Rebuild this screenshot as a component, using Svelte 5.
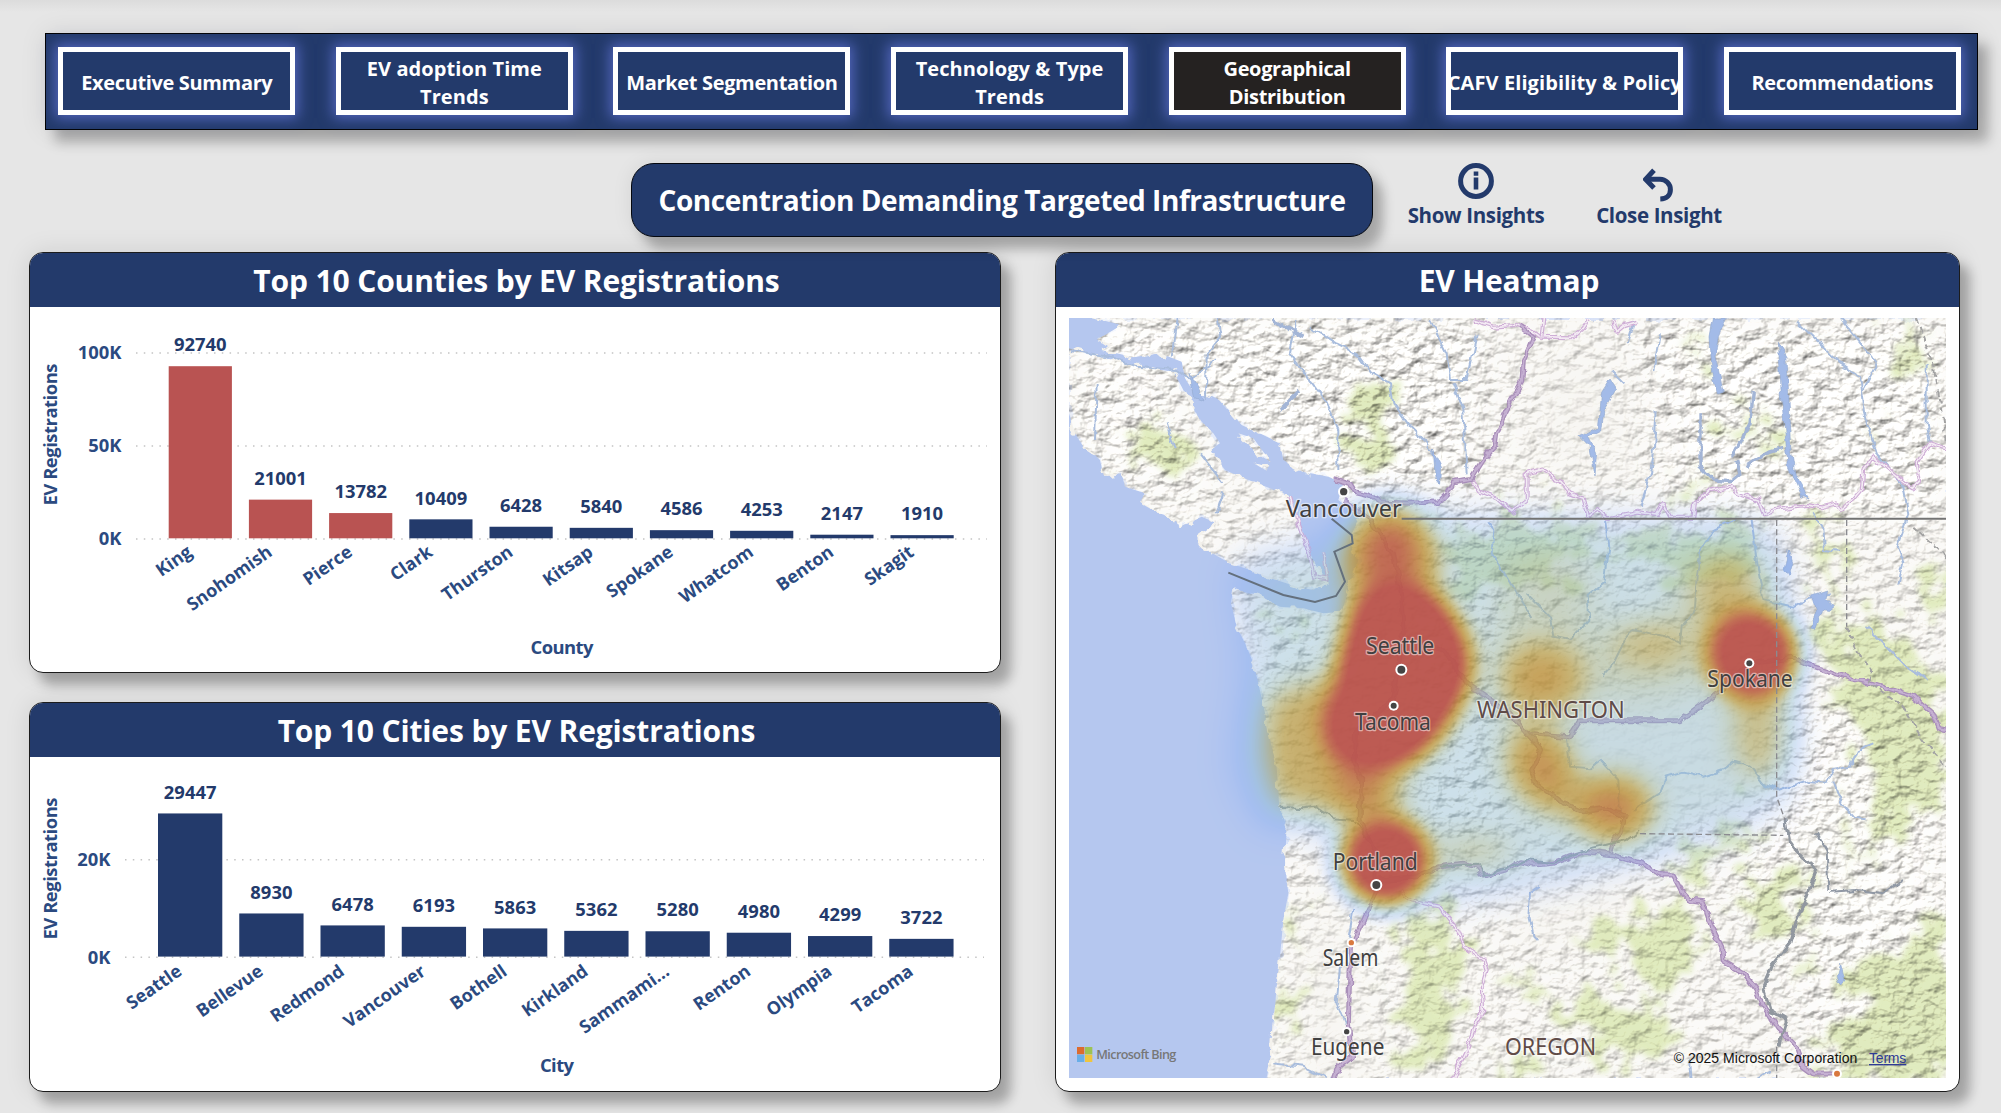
<script>
  const tabs = [
    { lines: ['Executive Summary'] },
    { lines: ['EV adoption Time', 'Trends'], wide: true },
    { lines: ['Market Segmentation'] },
    { lines: ['Technology & Type', 'Trends'], wide: true },
    { lines: ['Geographical', 'Distribution'], active: true },
    { lines: ['CAFV Eligibility & Policy'], wide: true },
    { lines: ['Recommendations'] }
  ];

  const charts = [
    {
      title: 'Top 10 Counties by EV Registrations',
      kind: 'counties',
      top: 307, height: 365,
      axis: 'County', axisX: 562, axisY: 654, axisW: 63, nameY: 434.5,
      gridX: 136, gridEnd: 987, tickX: 121.5,
      base: 538.7, unit: 0.00186,
      ticks: [[100000, '100K'], [50000, '50K'], [0, '0K']],
      barX: 168.7, pitch: 80.2, barW: 63.2, labelDrop: 15,
      rows: [
        ['King', 92740, true], ['Snohomish', 21001, true], ['Pierce', 13782, true],
        ['Clark', 10409], ['Thurston', 6428], ['Kitsap', 5840], ['Spokane', 4586],
        ['Whatcom', 4253], ['Benton', 2147], ['Skagit', 1910]
      ]
    },
    {
      title: 'Top 10 Cities by EV Registrations',
      kind: 'cities',
      top: 757, height: 334,
      axis: 'City', axisX: 557, axisY: 1072, axisW: 34, nameY: 868.5,
      gridX: 125, gridEnd: 984, tickX: 110.5,
      base: 957, unit: 0.004875,
      ticks: [[20000, '20K'], [0, '0K']],
      barX: 158, pitch: 81.25, barW: 64.3, labelDrop: 16,
      rows: [
        ['Seattle', 29447], ['Bellevue', 8930], ['Redmond', 6478], ['Vancouver', 6193],
        ['Bothell', 5863], ['Kirkland', 5362], ['Sammami…', 5280], ['Renton', 4980],
        ['Olympia', 4299], ['Tacoma', 3722]
      ]
    }
  ];

  const places = [
    { name: 'Vancouver', x: 707, y: 652, w: 348, dot: [881, 575, 11] },
    { name: 'Seattle', x: 948, y: 1061, w: 205, dot: [1054, 1109, 12] },
    { name: 'Tacoma', x: 915, y: 1291, w: 227, dot: [1031, 1217, 9] },
    { name: 'Portland', x: 848, y: 1709, w: 255, dot: [979, 1755, 12] },
    { name: 'Spokane', x: 1972, y: 1160, w: 256, dot: [2098, 1090, 9] },
    { name: 'Salem', x: 818, y: 1999, w: 167, dot: [904, 1928, 8], capital: true },
    { name: 'Eugene', x: 783, y: 2264, w: 220, dot: [890, 2195, 8] }
  ];

  const motorways = [
    'M850 536 L900 550 L915 575 L960 585 L990 605 L1080 610 L1170 605 L1190 585 L1210 545 L1265 535 L1300 480 L1335 440 L1340 400 L1360 350 L1385 300 L1415 250 L1420 180 L1450 110 L1410 80',
    'M880 600 L960 660 L1030 760 L1052 880 L1060 1000 L1030 1200 L920 1290 L915 1390 L935 1440 L930 1560 L975 1650 L975 1780 L940 1860 L905 1930 L898 2060 L895 2170 L905 2270 L865 2300 L850 2340',
    'M1050 1010 L1180 1050 L1250 1150 L1380 1240 L1430 1300 L1560 1310 L1590 1262 L1890 1262 L1990 1190 L2100 1090 L2230 1075 L2290 1100 L2400 1135 L2470 1150 L2590 1190 L2650 1240 L2668 1285 L2690 1290',
    'M1430 1300 L1475 1350 L1445 1410 L1460 1450 L1530 1505 L1600 1535 L1670 1525 L1725 1550 L1710 1600 L1690 1625 L1680 1665',
    'M985 1740 L1100 1730 L1170 1700 L1240 1690 L1280 1700 L1300 1725 L1370 1710 L1410 1685 L1450 1695 L1510 1690 L1560 1670 L1610 1655 L1690 1665 L1770 1690 L1840 1725 L1870 1725 L1900 1780 L1920 1800 L1960 1805 L1985 1880 L2015 1940 L2020 1985 L2080 2020 L2120 2070 L2140 2120 L2180 2180 L2240 2240 L2260 2300 L2290 2322 L2361 2322'
  ];
  const highways = [
    'M1270 60 L1330 80 L1390 75 L1450 95 L1470 110 L1570 112 L1600 85 L1620 54',
    'M1480 54 L1475 110 M1690 60 L1700 95 L1725 75 L1760 65',
    'M1265 540 L1290 575 L1340 595 L1385 635 L1430 600 L1430 520 L1475 508 L1530 545 L1560 580 L1600 595 L1615 650 L1640 630 L1670 655 L1760 635 L1820 645 L1840 612 L1860 650 L1930 650 L1935 610 L1980 570 L2040 560 L2060 580 L2125 600 L2140 640 L2190 625 L2270 615 L2310 622 L2360 610 L2375 630 L2410 600 L2435 570 L2440 510 L2470 470 L2530 520 L2590 565 L2610 545 L2600 490 L2640 430 L2690 445',
    'M720 590 L740 660 L755 700 L775 750 L795 830 L830 835 L820 760',
    'M1050 1775 L1080 1800 L1170 1820 L1190 1850 L1225 1890 L1245 1940 L1300 1980 L1310 2010 L1295 2060 L1300 2130 L1270 2190 L1250 2250 L1205 2340'
  ];
  const rivers = [
    'M780 80 L860 130 L920 160 L960 215 L1020 250 L1030 310 L1080 380 L1130 430 L1165 490 L1170 550',
    'M1140 60 L1190 160 L1200 240 L1250 240 L1280 100',
    'M1210 250 L1240 330 L1250 520',
    'M740 60 L720 160 L830 310 L865 390 L865 510',
    'M380 54 L365 170 M500 54 L510 110 L470 160 L468 300',
    'M57 150 L180 170 L260 200 L380 210 L420 240 L500 180',
    'M350 370 L375 450 M450 460 L520 550 M520 580 L500 640 M140 250 L135 420',
    'M1680 210 L1720 250 M1750 60 L1730 130 M1830 100 L1810 210',
    'M1820 330 L1810 470 L1790 560 L1770 620',
    'M2240 60 L2370 190 L2430 230 L2450 370 L2480 460 L2560 560 L2575 640 L2540 740 L2560 790 L2545 855',
    'M2370 54 L2480 190 L2440 270',
    'M2630 190 L2630 370 L2640 430',
    'M2290 640 L2320 690 L2325 750 L2370 755',
    'M2105 660 L2120 780 L2140 900 L2230 920 L2270 900 L2340 880',
    'M2060 655 L1990 690 L1955 740 L1940 830 L1935 930 L1895 980 L1890 1030 L1850 1010 L1750 990 L1730 1010 L1690 1090 L1655 1130',
    'M1665 660 L1675 740 L1660 850 L1610 890 L1615 960 L1560 1020 L1510 1010 L1500 950 L1430 880',
    'M1550 1310 L1560 1400 L1620 1405 L1650 1380 L1705 1440 L1710 1540',
    'M1750 1530 L1830 1480 L1850 1430 L1900 1415 L1960 1430 L2020 1410 L2050 1385 L2100 1400 L2140 1450 L2180 1470',
    'M2180 1470 L2280 1440 L2330 1445 L2350 1410 L2400 1400 L2420 1350 L2470 1330',
    'M2350 1445 L2375 1510 L2410 1550 L2450 1555',
    'M1470 1760 L1440 1780 L1435 1850 L1450 1910 L1460 1920',
    'M2450 980 L2500 1030 L2570 1100 L2630 1140',
    'M910 1830 L895 1920 M870 2000 L860 2110 L885 2170',
    'M670 2290 L760 2300 L830 2335 M1920 2280 L1925 2340 M2110 2340 L2160 2310',
    'M1310 665 L1330 690 L1325 760 L1370 830 L1450 960'
  ];
</script>

<div class="page">
  <nav class="tabs">
    {#each tabs as tab}
      <button class="tab" class:active={tab.active} class:wide={tab.wide}>
        {#each tab.lines as line}<span>{line}</span>{/each}
      </button>
    {/each}
  </nav>

  <header class="headline">
    <h1>Concentration Demanding Targeted Infrastructure</h1>
    <button class="action show">
      <svg width="36" height="36" viewBox="0 0 36 36">
        <circle cx="18" cy="18" r="15.4" />
        <path class="solid" d="M15.7 8.6h4.6v4.2h-4.6zM15.7 14.4h4.6v12h-4.6z" />
      </svg>
      <span>Show Insights</span>
    </button>
    <button class="action close">
      <svg width="32" height="34" viewBox="0 0 32 34">
        <path d="M2.8 11.3H17a10.4 10.4 0 0 1 10.4 10.4c0 5-3.4 9-10.1 9.2" />
        <path d="M11 2.2 2.6 11.3l8.4 8.6" />
      </svg>
      <span>Close Insight</span>
    </button>
  </header>

  <main>
    <div class="left">
      {#each charts as c}
        <section class="card {c.kind}">
          <h2>{c.title}</h2>
          <svg class="chart" width="970" height={c.height} viewBox="30 {c.top} 970 {c.height}">
            <text class="axis" text-anchor="middle" textLength="142" transform="translate(57.3 {c.nameY}) rotate(-90)">EV Registrations</text>
            {#each c.ticks as [v, label]}
              <line class="grid" x1={c.gridX} x2={c.gridEnd} y1={c.base + 0.3 - v * c.unit} y2={c.base + 0.3 - v * c.unit} />
              <text class="axis" text-anchor="end" x={c.tickX} y={c.base + 6.6 - v * c.unit}>{label}</text>
            {/each}
            {#each c.rows as [name, value, hot], i}
              <rect class:hot x={c.barX + i * c.pitch} y={c.base - value * c.unit} width={c.barW} height={value * c.unit - 0.4} />
              <text class="value" text-anchor="middle" x={c.barX + i * c.pitch + c.barW / 2} y={c.base - value * c.unit - 14.8}>{value}</text>
              <text class="axis slant" text-anchor="end" transform="translate({c.barX + i * c.pitch + c.barW / 2 - 7} {c.base + c.labelDrop + 1}) rotate(-35)">{name}</text>
            {/each}
            <text class="axis" text-anchor="middle" textLength={c.axisW} x={c.axisX} y={c.axisY}>{c.axis}</text>
          </svg>
        </section>
      {/each}
    </div>

    <section class="card heat">
      <h2>EV Heatmap</h2>
      <svg class="map" width="877" height="760" viewBox="57 54 2631 2280">
        <defs>
          <filter id="relief" x="0" y="0" width="100%" height="100%" color-interpolation-filters="sRGB">
            <feTurbulence type="fractalNoise" baseFrequency="0.02 0.027" numOctaves="4" seed="21" result="n" />
            <feDiffuseLighting in="n" surfaceScale="10" diffuseConstant="1.19" lighting-color="#f8f6f2">
              <feDistantLight azimuth="235" elevation="58" />
            </feDiffuseLighting>
            <feComposite in2="SourceGraphic" operator="in" />
          </filter>
          <filter id="rough" x="-5%" y="-5%" width="110%" height="110%">
            <feTurbulence type="fractalNoise" baseFrequency="0.025" numOctaves="3" seed="4" />
            <feDisplacementMap in="SourceGraphic" scale="42" xChannelSelector="R" yChannelSelector="G" />
          </filter>
          <filter id="woods" x="-10%" y="-10%" width="120%" height="120%">
            <feTurbulence type="fractalNoise" baseFrequency="0.012" numOctaves="5" seed="12" />
            <feDisplacementMap in="SourceGraphic" scale="260" xChannelSelector="R" yChannelSelector="G" />
            <feGaussianBlur stdDeviation="9" />
          </filter>
          <filter id="wiggle" x="-5%" y="-5%" width="110%" height="110%">
            <feTurbulence type="fractalNoise" baseFrequency="0.03" numOctaves="2" seed="2" />
            <feDisplacementMap in="SourceGraphic" scale="22" xChannelSelector="R" yChannelSelector="G" />
          </filter>
          <filter id="soft60" x="-50%" y="-50%" width="200%" height="200%"><feGaussianBlur stdDeviation="60" /></filter>
          <filter id="soft42" x="-80%" y="-80%" width="260%" height="260%"><feGaussianBlur stdDeviation="46" /></filter>
          <filter id="soft30" x="-50%" y="-50%" width="200%" height="200%"><feGaussianBlur stdDeviation="35" /></filter>
          <!-- Density is accumulated as alpha, then mapped onto the colour ramp. -->
          <filter id="ramp" filterUnits="userSpaceOnUse" x="57" y="54" width="2631" height="2280" color-interpolation-filters="sRGB">
            <feColorMatrix values="0 0 0 1 0  0 0 0 1 0  0 0 0 1 0  0 0 0 1 0" />
            <feComponentTransfer>
              <feFuncR type="table" tableValues="0.45 0.48 0.55 0.60 0.67 0.71 0.73 0.74 0.74 0.73 0.73" />
              <feFuncG type="table" tableValues="0.62 0.66 0.73 0.70 0.66 0.61 0.56 0.48 0.39 0.33 0.33" />
              <feFuncB type="table" tableValues="0.98 0.95 0.82 0.62 0.42 0.28 0.22 0.24 0.28 0.30 0.30" />
              <feFuncA type="table" tableValues="0 0.26 0.43 0.52 0.62 0.73 0.80 0.86 0.92 0.96 0.96" />
            </feComponentTransfer>
          </filter>
          <clipPath id="land">
            <path d="M130 54 L215 75 L165 105 L140 118 L190 135 L160 150 L250 172 L330 160 L395 185 L405 235 L440 290 L480 285 L510 300 L545 340 L575 375 L640 405 L690 430 L700 480 L760 515 L835 530 L880 550 L865 600 L930 655 L900 710 L925 780 L900 860 L875 935 L820 940 L760 925 L690 920 L640 895 L550 865 L543 910 L560 980 L590 1040 L610 1090 L625 1150 L645 1240 L660 1320 L680 1400 L687 1510 L710 1580 L705 1700 L715 1780 L700 1860 L690 1970 L680 2060 L670 2180 L665 2270 L648 2340 L2700 2340 L2700 54Z" />
            <path d="M57 145 L150 172 L270 200 L370 215 L395 260 L420 310 L450 360 L490 400 L510 430 L480 450 L525 510 L560 525 L620 550 L700 580 L730 640 L760 700 L780 760 L800 800 L835 840 L790 870 L740 860 L680 840 L600 810 L540 790 L460 745 L445 710 L500 670 L455 650 L390 680 L375 660 L330 640 L270 605 L285 580 L225 560 L215 520 L160 525 L150 480 L130 460 L100 440 L75 400 L57 340Z" />
            <path d="M565 400 L610 415 L662 485 L620 460Z M610 490 L655 500 L650 512Z" />
          </clipPath>
          <mask id="hills">
            <g filter="url(#soft60)">
              <rect x="0" y="0" width="2750" height="2400" fill="#999" />
              <path d="M57 54 H1280 L1230 560 L830 540 L440 250 L57 130Z" fill="#fff" />
              <path d="M1780 54 H2700 V640 L1900 600Z" fill="#f4f4f4" />
              <path d="M57 180 L340 280 L470 640 L57 420Z" fill="#eee" />
              <path d="M1150 650 H1450 L1400 1100 L1300 1600 L1100 1600Z" fill="#ddd" />
              <path d="M2300 1200 L2700 1300 V2340 H2400 L2050 1700Z" fill="#ddd" />
              <path d="M650 930 H900 V1150 H700Z" fill="#ddd" />
              <path d="M1500 120 L1730 200 L1700 560 L1450 480Z" fill="#555" />
              <path d="M1480 1150 L2150 1100 L2120 1560 L1500 1550Z" fill="#222" />
              <path d="M1350 1780 L1800 1740 L1760 1880 L1400 1960Z" fill="#444" />
              <path d="M780 1850 L880 1800 L960 2340 L760 2340Z" fill="#444" />
            </g>
          </mask>
        </defs>

        <rect class="sea" x="57" y="54" width="2631" height="2280" />
        <g filter="url(#rough)">
          <g clip-path="url(#land)">
            <rect class="ground" x="57" y="54" width="2700" height="2340" />
          </g>
        </g>
        <g clip-path="url(#land)">
          <g class="forest" filter="url(#woods)">
            <path d="M260 340 L330 330 L350 420 L430 420 L400 520 L230 500Z" />
            <path d="M950 250 L1010 260 L1000 330 L1040 400 L1030 500 L960 500 L890 400 L900 320Z" />
            <path d="M1350 560 L1400 590 L1380 620Z M1485 610 L1550 640 L1480 650Z M1890 520 L1940 530 L1930 610 L1890 570Z" />
            <path d="M2030 360 L2090 340 L2100 400 L2040 420Z M2130 380 L2200 370 L2190 430 L2130 420Z M1890 120 L1950 140 L1930 180Z" />
            <path d="M2530 54 L2590 54 L2640 200 L2590 190Z M2490 360 L2540 380 L2500 400Z M2660 90 L2690 110 L2690 130Z" />
            <path d="M2250 680 L2380 700 L2370 900 L2330 860Z M2300 1000 L2440 940 L2560 1050 L2690 1180 L2690 1500 L2470 1620 L2350 1770 L2450 1600 L2460 1400 L2350 1180Z" />
            <path d="M2650 800 L2700 780 V980 L2640 900Z" />
            <path d="M1170 700 L1450 670 L1660 700 L1500 860 L1200 900Z M1650 720 L2100 680 L2140 800 L1900 860Z" />
            <path d="M1930 1620 L2120 1530 L2110 1600 L2000 1650 L1960 1760 L1890 1740Z M2050 1780 L2250 1720 L2310 1680 L2250 1880 L2130 1900Z" />
            <path d="M1080 1830 L1190 1830 L1240 1950 L1210 2150 L1220 2300 L1060 2250 L1030 2140 L1080 2000Z" />
            <path d="M700 1820 L760 1840 L730 1920 L700 1900Z M690 2040 L800 2060 L750 2150 L680 2200Z" />
            <path d="M1560 1940 L1700 1850 L1900 1820 L1950 2000 L1860 2080 L1700 1960Z M1410 2080 L1650 2100 L1850 2130 L1880 2260 L1700 2300 L1600 2170Z" />
            <path d="M2440 1960 L2520 1930 L2640 1900 L2700 1850 V2340 H2340 L2380 2200Z M2230 1960 L2290 1980 L2240 2010Z M1380 2060 L1460 2040 L1450 2090Z" />
            <path d="M650 970 L760 940 L740 1020Z M1300 2290 L1420 2260 L1430 2330Z" />
          </g>
          <g mask="url(#hills)" class="shade">
            <rect x="57" y="54" width="2700" height="2340" filter="url(#relief)" />
          </g>
        </g>

        <g filter="url(#wiggle)">
          <g class="rivers">
            {#each rivers as d}<path {d} />{/each}
          </g>
          <path class="lake" d="M1990 54 L2030 54 L2005 110 L1995 170 L2010 230 L2020 280 L2002 285 L1985 200 L1980 110Z M2185 130 L2208 170 L2212 270 L2222 440 L2235 520 L2280 600 L2255 590 L2215 500 L2195 300Z M1680 240 L1700 270 L1662 330 L1655 390 L1615 410 L1640 460 L1635 525 L1620 440 L1590 410 L1645 380 L1655 280Z M2215 750 L2228 790 L2218 825 L2204 800Z M2285 885 L2330 870 L2325 895 L2350 920 L2310 950 L2298 985 L2285 980 L2300 930Z M2372 1990 L2385 2040 L2375 2055 L2362 2030Z M1150 450 L1175 500 L1172 550 L1155 530Z M420 220 L460 300 L430 290Z" />
          <path class="lake thin" d="M1950 340 L1950 500 L1990 540 L2040 545 L2070 520 L2060 480 M2090 500 L2150 460 L2200 445 M2110 270 L2100 370 L2050 465 M670 60 L760 110 M690 330 L750 270" />
        </g>

        <g filter="url(#wiggle)" class="roads">
          {#each highways as d}<path class="road-edge thin" {d} /><path class="road-core thin" {d} />{/each}
          {#each motorways as d}<path class="road-edge" {d} /><path class="road-core" {d} />{/each}
        </g>

        <g filter="url(#wiggle)">
          <path class="snake" d="M2205 1560 L2215 1620 L2250 1665 L2300 1710 L2270 1790 L2240 1860 L2220 1930 L2170 1990 L2140 2060 L2160 2130 L2210 2160 L2200 2190 L2190 2240" />
          <path class="state wide" d="M2390 980 L2420 1050 L2460 1110 L2460 1150 L2560 1220 L2600 1290 L2640 1350 L2690 1400 M2600 54 L2650 200 L2680 350 L2690 420 M2590 680 L2690 770" />
          <path class="snake dim" d="M685 1520 L760 1525 L800 1520 L850 1555 L910 1560 L950 1610 M1170 1700 L1290 1690 L1300 1725 L1370 1705 L1430 1680 L1510 1690 L1620 1645 L1730 1620 L1770 1590 M2340 1775 L2420 1770 L2500 1780 L2560 1740 M2300 1600 L2330 1650 L2335 1770" />
        </g>

        <g filter="url(#ramp)">
          <path filter="url(#soft60)" fill-opacity=".2" d="M560 800 L850 720 L950 640 L1150 660 L2140 680 L2200 900 L2210 1480 L2100 1560 L1900 1640 L1500 1740 L1150 1800 L900 1720 L830 1560 L640 1580 L560 1400 L600 1100Z" />
          <path filter="url(#soft42)" fill-opacity=".42" d="M655 1190 L860 1120 L1000 1400 L1000 1560 L880 1530 L680 1520 L640 1350Z" />
          <path filter="url(#soft60)" fill-opacity=".15" d="M1380 740 L1600 740 L1660 1040 L1850 1000 L1900 760 L2150 740 L2150 900 L1960 1160 L1800 1200 L1500 1200 L1400 1400 L1320 1000Z" />
          <ellipse filter="url(#soft42)" fill-opacity=".5" cx="1022" cy="790" rx="145" ry="170" />
          <ellipse filter="url(#soft42)" fill-opacity=".6" cx="1020" cy="760" rx="85" ry="110" />
          <path filter="url(#soft30)" d="M1000 840 Q1150 840 1215 950 Q1300 1080 1240 1190 Q1170 1340 1070 1395 Q930 1440 845 1360 Q790 1270 850 1170 Q870 1000 920 900Z" />
          <ellipse filter="url(#soft42)" fill-opacity=".42" cx="950" cy="1460" rx="105" ry="120" />
          <circle filter="url(#soft30)" fill-opacity=".98" cx="1008" cy="1682" r="132" />
          <circle filter="url(#soft30)" fill-opacity=".95" cx="2105" cy="1062" r="136" />
          <ellipse filter="url(#soft42)" fill-opacity=".26" cx="2030" cy="880" rx="100" ry="120" />
          <ellipse filter="url(#soft42)" fill-opacity=".32" cx="2130" cy="1280" rx="85" ry="165" />
          <ellipse filter="url(#soft42)" fill-opacity=".44" cx="1475" cy="1140" rx="120" ry="105" />
          <ellipse filter="url(#soft42)" fill-opacity=".28" cx="1800" cy="1030" rx="120" ry="65" />
          <ellipse filter="url(#soft42)" fill-opacity=".58" cx="1475" cy="1400" rx="95" ry="120" transform="rotate(-25 1475 1400)" />
          <ellipse filter="url(#soft42)" fill-opacity=".64" cx="1695" cy="1525" rx="112" ry="96" />
          <ellipse filter="url(#soft42)" fill-opacity=".34" cx="1570" cy="1500" rx="95" ry="50" />
          <ellipse filter="url(#soft42)" fill-opacity=".26" cx="1270" cy="1655" rx="120" ry="40" />
        </g>

        <path class="border" d="M1055 656 H2688" />
        <path class="border thin" d="M845 656 L905 705 L908 730 L853 755 L885 845 L858 888 L795 906 L700 885 L535 818" />
        <path class="state" d="M2180 660 V1490 L2205 1560 M2390 660 V980 M1770 1601 L2200 1606 M2180 2240 V2334" />

        {#each places as p}
          <circle class="ring" cx={p.dot[0]} cy={p.dot[1]} r={p.dot[2] + 6} />
          <circle class="dot" class:capital={p.capital} cx={p.dot[0]} cy={p.dot[1]} r={p.dot[2]} />
          <text class="place" x={p.x} y={p.y} textLength={p.w} lengthAdjust="spacingAndGlyphs">{p.name}</text>
        {/each}
        <circle class="ring" cx="2361" cy="2321" r="15" />
        <circle class="dot capital" cx="2361" cy="2321" r="9" />
        <text class="place region" x="1281" y="1254" textLength="443" lengthAdjust="spacingAndGlyphs">WASHINGTON</text>
        <text class="place region" x="1365" y="2264" textLength="273" lengthAdjust="spacingAndGlyphs">OREGON</text>

        <g>
          <path fill="#dc6b2f" d="M81 2241h22v22h-22z" />
          <path fill="#9cc353" d="M105 2241h22v22h-22z" />
          <path fill="#68aee8" d="M81 2264h22v22h-22z" />
          <path fill="#efc53f" d="M105 2264h22v22h-22z" />
          <text class="bing" x="139" y="2278" textLength="240">Microsoft Bing</text>
        </g>
        <text class="legal" x="1871" y="2289" textLength="551">© 2025 Microsoft Corporation</text>
        <text class="legal terms" x="2457" y="2289" textLength="112">Terms</text>
      </svg>
    </section>
  </main>
</div>

<style>
  :global(body) { margin: 0; background: #e6e6e6; }
  .page {
    box-sizing: border-box;
    width: 2001px;
    height: 1113px;
    padding-top: 33px;
    overflow: hidden;
    background: linear-gradient(#dcdcdc, #e6e6e6 12px);
    font-family: 'Open Sans', 'Noto Sans', sans-serif;
  }
  button { border: 0; background: none; font: inherit; }

  .tabs {
    display: flex;
    gap: 40.6px;
    box-sizing: border-box;
    width: 1933px;
    height: 97px;
    margin-left: 45px;
    padding: 13px 0 0 12.3px;
    background: #233a6b;
    border: 1px solid #000;
    box-shadow: 10px 12px 12px rgba(0, 0, 0, 0.26), 0 0 26px rgba(0, 0, 0, 0.09);
  }
  .tab {
    display: flex;
    flex: none;
    flex-direction: column;
    align-items: center;
    justify-content: center;
    box-sizing: border-box;
    width: 237px;
    height: 68px;
    padding: 4px 0 0;
    overflow: hidden;
    border: 5px solid #fff;
    background: #233a6b;
    box-shadow: 0 0 13px 3px rgba(92, 110, 205, 0.85);
    color: #fff;
    font-size: 20px;
    font-weight: 700;
    line-height: 28px;
    letter-spacing: -0.35px;
    white-space: nowrap;
  }
  .tab.active { background: #252221; }
  .tab.wide { letter-spacing: 0.09px; }

  .headline {
    position: relative;
    z-index: 1;
    display: flex;
    align-items: flex-start;
    height: 74px;
    margin-bottom: 15px;
    padding: 33px 0 0 631px;
  }
  h1 {
    box-sizing: border-box;
    width: 742px;
    height: 74px;
    margin: 0;
    border: 1px solid #05080f;
    border-radius: 23px;
    background: #233a6b;
    box-shadow: 10px 12px 12px rgba(0, 0, 0, 0.26), 0 0 20px rgba(0, 0, 0, 0.08);
    color: #fff;
    font-size: 28px;
    font-weight: 700;
    line-height: 73px;
    letter-spacing: -0.44px;
    text-align: center;
    white-space: nowrap;
  }
  .action {
    display: flex;
    flex-direction: column;
    align-items: center;
    padding: 0;
    color: #233a6b;
    font-size: 20.5px;
    font-weight: 700;
    line-height: 28px;
    letter-spacing: -0.35px;
    white-space: nowrap;
  }
  .action svg { fill: none; stroke: #233a6b; stroke-width: 5; }
  .action .solid { fill: #233a6b; stroke: none; }
  .show { width: 140px; margin-left: 33px; }
  .show span { margin-top: 1.5px; }
  .close { width: 130px; margin-left: 48px; padding-top: 4.5px; }
  .close span { margin-top: -1px; }

  main { display: flex; gap: 54px; padding-left: 29px; }
  .left { display: flex; flex-direction: column; gap: 29px; }
  .card {
    box-sizing: border-box;
    width: 972px;
    border: 1px solid #1c1c1c;
    border-radius: 14px;
    background: #fff;
    box-shadow: 10px 12px 12px rgba(0, 0, 0, 0.27), 0 0 26px rgba(0, 0, 0, 0.1);
  }
  .card h2 {
    height: 54px;
    margin: 0;
    padding-left: 3px;
    border-radius: 13px 13px 0 0;
    background: #233a6b;
    color: #fff;
    font-size: 30px;
    font-weight: 700;
    line-height: 56px;
    letter-spacing: -0.14px;
    text-align: center;
    white-space: nowrap;
  }
  .counties { height: 421px; }
  .cities { height: 390px; }
  .heat { width: 905px; height: 840px; }
  .heat h2 { letter-spacing: -0.2px; }
  .chart { display: block; }
  .chart rect { fill: #233a6b; }
  .chart rect.hot { fill: #b95352; }
  .chart text { font-size: 18.4px; font-weight: 700; }
  .chart text.slant { font-size: 17.9px; }
  .value { fill: #233a6b; }
  .axis { fill: #2b4a80; }
  .grid { stroke: #c4c4c4; stroke-width: 1.5; stroke-dasharray: 1.5 6.3; }

  .map { display: block; margin: 11px auto 0; }
  .sea { fill: #b5c7ef; }
  .ground { fill: #f4f2ed; }
  .forest { fill: #dbe8b4; opacity: 0.85; }
  .shade { mix-blend-mode: multiply; }
  .rivers { fill: none; stroke: #a9bddd; stroke-width: 6; }
  .lake { fill: #a3bbe8; stroke: #94aad0; stroke-width: 2; }
  .lake.thin { fill: none; stroke: #a3b5d6; stroke-width: 10; }
  .roads { fill: none; stroke-linejoin: round; }
  .road-edge { stroke: #a98fb9; stroke-width: 15; }
  .road-core { stroke: #c5b0d2; stroke-width: 7; }
  .road-edge.thin { stroke: #cfaed6; stroke-width: 12; }
  .road-core.thin { stroke: #f4ebf4; stroke-width: 5; }
  .border { fill: none; stroke: #737373; stroke-width: 6; }
  .border.thin { stroke: #64707d; stroke-width: 6; }
  .state { fill: none; stroke: #8b8b90; stroke-width: 4; stroke-dasharray: 18 10; }
  .state.wide { stroke-width: 6; stroke: #a3a3a3; }
  .snake { fill: none; stroke: #91979f; stroke-width: 9; }
  .snake.dim { stroke: #9098a4; stroke-width: 6; }
  .ring { fill: #fff; }
  .dot { fill: #454545; }
  .dot.capital { fill: #d9793f; }
  .place {
    fill: #404040;
    stroke: rgba(255, 255, 255, 0.5);
    stroke-width: 8;
    stroke-linejoin: round;
    paint-order: stroke;
    font-family: 'Noto Sans', 'Open Sans', sans-serif;
    font-size: 69px;
  }
  .region { fill: #5f4b48; }
  .bing { fill: #777; font-size: 38px; font-weight: 600; }
  .legal { fill: #111; font-family: 'Liberation Sans', Arial, sans-serif; font-size: 42px; }
  .terms { fill: #2f3a94; text-decoration: underline; }
</style>
